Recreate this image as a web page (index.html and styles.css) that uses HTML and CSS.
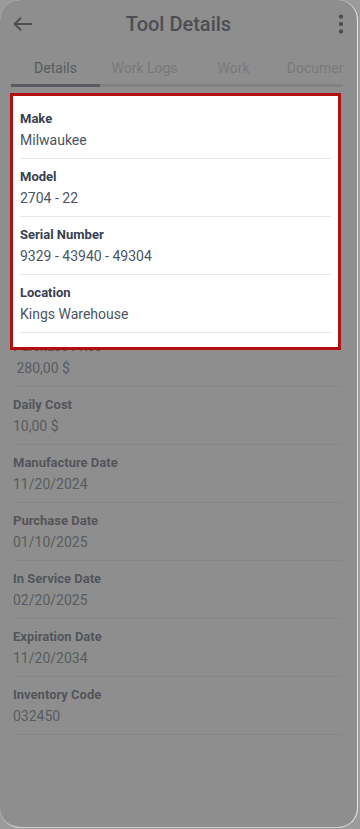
FILE: index.html
```html
<!DOCTYPE html>
<html lang="en">
<head>
<meta charset="utf-8">
<title>Tool Details</title>
<link rel="stylesheet" href="styles.css">
</head>
<body>
<div class="phone">
  <header class="topbar">
    <button class="icon-btn back" aria-label="Back">
      <svg width="20" height="14" viewBox="0 0 20 14"><path d="M18.5 7H1.8M7.5 1.2L1.6 7l5.9 5.8" fill="none" stroke="#1f2937" stroke-width="2" stroke-linecap="round" stroke-linejoin="round"/></svg>
    </button>
    <h1 class="title">Tool Details</h1>
    <button class="icon-btn more" aria-label="More">
      <svg width="6" height="20" viewBox="0 0 6 20"><circle cx="3" cy="2.6" r="2.2" fill="#1f2937"/><circle cx="3" cy="10" r="2.2" fill="#1f2937"/><circle cx="3" cy="17.4" r="2.2" fill="#1f2937"/></svg>
    </button>
  </header>
  <nav class="tabs">
    <div class="tab active">Details</div>
    <div class="tab">Work Logs</div>
    <div class="tab">Work</div>
    <div class="tab">Documents</div>
  </nav>
  <main class="list">
    <div class="row"><div class="label">Make</div><div class="value">Milwaukee</div></div>
    <div class="row"><div class="label">Model</div><div class="value">2704 - 22</div></div>
    <div class="row"><div class="label">Serial Number</div><div class="value">9329 - 43940 - 49304</div></div>
    <div class="row"><div class="label">Location</div><div class="value">Kings Warehouse</div></div>
    <div class="row"><div class="label">Purchase Price</div><div class="value indent">280,00 $</div></div>
    <div class="row"><div class="label">Daily Cost</div><div class="value">10,00 $</div></div>
    <div class="row"><div class="label">Manufacture Date</div><div class="value">11/20/2024</div></div>
    <div class="row"><div class="label">Purchase Date</div><div class="value">01/10/2025</div></div>
    <div class="row"><div class="label">In Service Date</div><div class="value">02/20/2025</div></div>
    <div class="row"><div class="label">Expiration Date</div><div class="value">11/20/2034</div></div>
    <div class="row"><div class="label">Inventory Code</div><div class="value">032450</div></div>
  </main>
  <div class="dim"></div>
  <section class="spotlight">
    <div class="row"><div class="label">Make</div><div class="value">Milwaukee</div></div>
    <div class="row"><div class="label">Model</div><div class="value">2704 - 22</div></div>
    <div class="row"><div class="label">Serial Number</div><div class="value">9329 - 43940 - 49304</div></div>
    <div class="row"><div class="label">Location</div><div class="value">Kings Warehouse</div></div>
  </section>
</div>
</body>
</html>
```

FILE: styles.css
```css
* { box-sizing: border-box; }
html, body { margin: 0; padding: 0; }
body {
  background: #9b9b9b;
  font-family: Roboto, "Liberation Sans", Arial, sans-serif;
  width: 360px;
  height: 829px;
  overflow: hidden;
}
.phone {
  position: relative;
  width: 358px;
  height: 828px;
  background: #ffffff;
  border-right: 1px solid #e6e6e6;
  border-bottom: 1px solid #cfcfcf;
  border-radius: 20px;
  overflow: hidden;
}
.topbar {
  height: 48px;
  display: flex;
  align-items: center;
  justify-content: space-between;
  padding: 0 13px 0 13px;
}
.icon-btn {
  border: 0;
  background: none;
  padding: 0;
  width: 22px;
  height: 22px;
  display: flex;
  align-items: center;
  justify-content: center;
}
.back { justify-content: flex-start; }
.more { justify-content: flex-end; }
.title {
  margin: 0;
  font-size: 20px;
  line-height: 28px;
  font-weight: 500;
  color: #1f2937;
}
.tabs {
  display: flex;
  margin-left: 11px;
  width: 332px;
  overflow: hidden;
  box-shadow: inset 0 -3px 0 #d1d5db;
}
.tab {
  flex: 0 0 89px;
  text-align: center;
  white-space: nowrap;
  font-size: 14px;
  line-height: 20px;
  padding: 10px 0 9px;
  color: #b4b9c0;
}
.tab.active {
  color: #4b5563;
  box-shadow: inset 0 -3px 0 #4b5563;
}
.list {
  margin-top: 10px;
  padding: 0 15px 0 13px;
}
.row {
  padding: 9px 0 8px;
  border-bottom: 1px solid #e5e7eb;
}
.label {
  font-size: 13px;
  line-height: 18px;
  font-weight: 700;
  color: #374151;
}
.value {
  margin-top: 2px;
  font-size: 14px;
  line-height: 20px;
  color: #4b5563;
}
.value.indent { padding-left: 3.5px; }
.dim {
  position: absolute;
  inset: 0;
  background: rgba(94, 94, 94, 0.7);
}
.spotlight {
  position: absolute;
  left: 10px;
  top: 93px;
  width: 331px;
  height: 257px;
  background: #ffffff;
  border: 3px solid #b20f0f;
  padding: 5px 7px 0;
}
```
